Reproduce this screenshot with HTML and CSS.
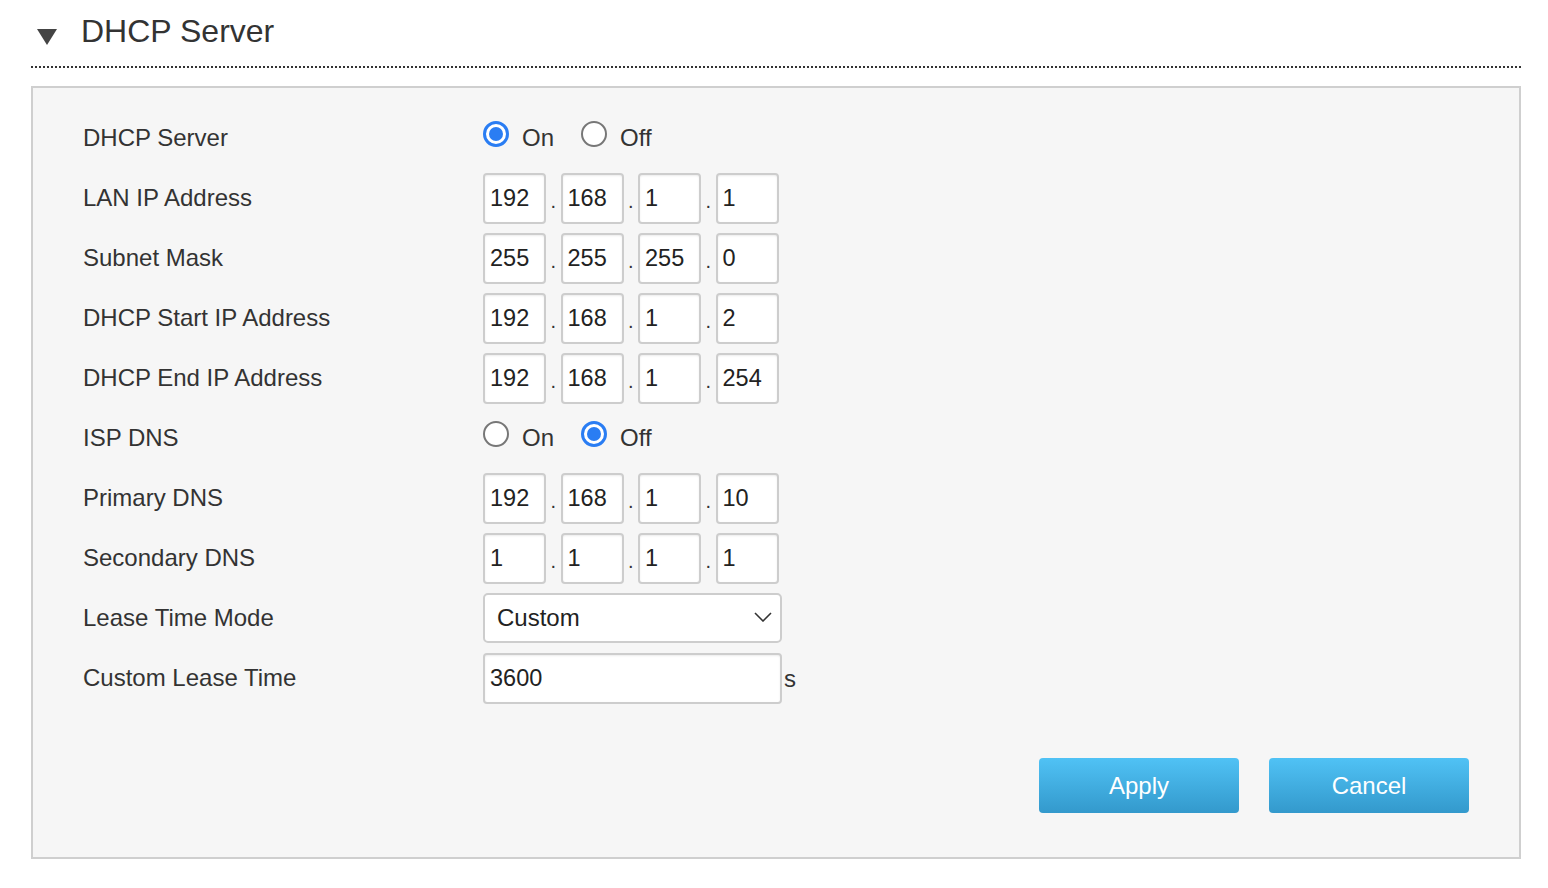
FILE: index.html
```html
<!DOCTYPE html>
<html>
<head>
<meta charset="utf-8">
<link rel="stylesheet" href="styles.css">
</head>
<body>
<div class="page">
  <div class="header">
    <span class="caret"></span>
    <h1 class="title">DHCP Server</h1>
  </div>
  <div class="panel">
    <div class="row">
      <div class="label">DHCP Server</div>
      <div class="field">
        <label class="radio"><span class="dot checked"></span>On</label>
        <label class="radio"><span class="dot"></span>Off</label>
      </div>
    </div>
    <div class="row">
      <div class="label">LAN IP Address</div>
      <div class="field ip">
        <div class="box">192</div><span class="sep">.</span><div class="box">168</div><span class="sep">.</span><div class="box">1</div><span class="sep">.</span><div class="box">1</div>
      </div>
    </div>
    <div class="row">
      <div class="label">Subnet Mask</div>
      <div class="field ip">
        <div class="box">255</div><span class="sep">.</span><div class="box">255</div><span class="sep">.</span><div class="box">255</div><span class="sep">.</span><div class="box">0</div>
      </div>
    </div>
    <div class="row">
      <div class="label">DHCP Start IP Address</div>
      <div class="field ip">
        <div class="box">192</div><span class="sep">.</span><div class="box">168</div><span class="sep">.</span><div class="box">1</div><span class="sep">.</span><div class="box">2</div>
      </div>
    </div>
    <div class="row">
      <div class="label">DHCP End IP Address</div>
      <div class="field ip">
        <div class="box">192</div><span class="sep">.</span><div class="box">168</div><span class="sep">.</span><div class="box">1</div><span class="sep">.</span><div class="box">254</div>
      </div>
    </div>
    <div class="row">
      <div class="label">ISP DNS</div>
      <div class="field">
        <label class="radio"><span class="dot"></span>On</label>
        <label class="radio"><span class="dot checked"></span>Off</label>
      </div>
    </div>
    <div class="row">
      <div class="label">Primary DNS</div>
      <div class="field ip">
        <div class="box">192</div><span class="sep">.</span><div class="box">168</div><span class="sep">.</span><div class="box">1</div><span class="sep">.</span><div class="box">10</div>
      </div>
    </div>
    <div class="row">
      <div class="label">Secondary DNS</div>
      <div class="field ip">
        <div class="box">1</div><span class="sep">.</span><div class="box">1</div><span class="sep">.</span><div class="box">1</div><span class="sep">.</span><div class="box">1</div>
      </div>
    </div>
    <div class="row">
      <div class="label">Lease Time Mode</div>
      <div class="field">
        <div class="select">
          <span>Custom</span>
          <svg class="chev" width="18" height="10" viewBox="0 0 18 10"><path d="M1 1 L9 9 L17 1" fill="none" stroke="#333" stroke-width="1.6"/></svg>
        </div>
      </div>
    </div>
    <div class="row">
      <div class="label">Custom Lease Time</div>
      <div class="field">
        <div class="box wide">3600</div><span class="unit">s</span>
      </div>
    </div>
    <div class="actions">
      <button class="btn">Apply</button>
      <button class="btn">Cancel</button>
    </div>
  </div>
</div>
</body>
</html>
```

FILE: styles.css
```css
* { box-sizing: border-box; }
html, body { margin: 0; padding: 0; background: #fff; }
body {
  font-family: "Liberation Sans", Arial, sans-serif;
  color: #333;
}
.page {
  margin-left: 31px;
  width: 1490px;
}
.header {
  height: 68px;
  display: flex;
  align-items: flex-start;
  border-bottom: 2px dotted #333;
}
.caret {
  width: 0;
  height: 0;
  border-left: 10px solid transparent;
  border-right: 10px solid transparent;
  border-top: 16px solid #444;
  margin: 29px 0 0 6px;
}
.title {
  margin: 12px 0 0 24px;
  font-size: 32px;
  font-weight: normal;
  line-height: 38px;
  color: #333;
}
.panel {
  margin-top: 18px;
  background: #f6f6f6;
  border: 2px solid #cfcfcf;
  padding: 20px 50px 44px 50px;
}
.row {
  height: 60px;
  display: flex;
  align-items: center;
}
.label {
  width: 400px;
  font-size: 24px;
  color: #333;
}
.field {
  display: flex;
  align-items: center;
  font-size: 24px;
}
.radio {
  display: flex;
  align-items: center;
  margin-right: 27px;
  color: #333;
}
.dot {
  width: 26px;
  height: 26px;
  border-radius: 50%;
  border: 2px solid #777;
  background: #fff;
  margin-right: 13px;
  margin-top: -9px;
  position: relative;
}
.dot.checked {
  border: 3px solid #2a7df3;
}
.dot.checked::after {
  content: "";
  position: absolute;
  left: 3px;
  top: 3px;
  width: 14px;
  height: 14px;
  border-radius: 50%;
  background: #2a7df3;
}
.box {
  width: 63px;
  height: 51px;
  background: #fff;
  border: 2px solid #cdcdcd;
  border-radius: 4px;
  box-shadow: inset 0 1px 2px rgba(0,0,0,0.08);
  padding-left: 5px;
  line-height: 47px;
  font-size: 23.5px;
  color: #222;
}
.box.wide {
  width: 299px;
}
.sep {
  width: 14.5px;
  text-align: center;
  font-size: 20px;
  align-self: flex-end;
  padding-bottom: 11px;
  color: #333;
}
.unit {
  font-size: 24px;
  margin-left: 2px;
  margin-top: 2px;
}
.select {
  width: 299px;
  height: 50px;
  background: #fff;
  border: 2px solid #cdcdcd;
  border-radius: 5px;
  display: flex;
  align-items: center;
  justify-content: space-between;
  padding: 0 8px 0 12px;
  font-size: 24px;
  color: #222;
}
.chev { margin-top: -2px; }
.actions {
  display: flex;
  justify-content: flex-end;
  gap: 30px;
  margin-top: 50px;
}
.btn {
  width: 200px;
  height: 55px;
  border: none;
  border-radius: 4px;
  background: linear-gradient(to bottom, #50c2f5, #3399cc);
  color: #fff;
  font-family: "Liberation Sans", Arial, sans-serif;
  font-size: 24px;
  padding: 0;
}
```
